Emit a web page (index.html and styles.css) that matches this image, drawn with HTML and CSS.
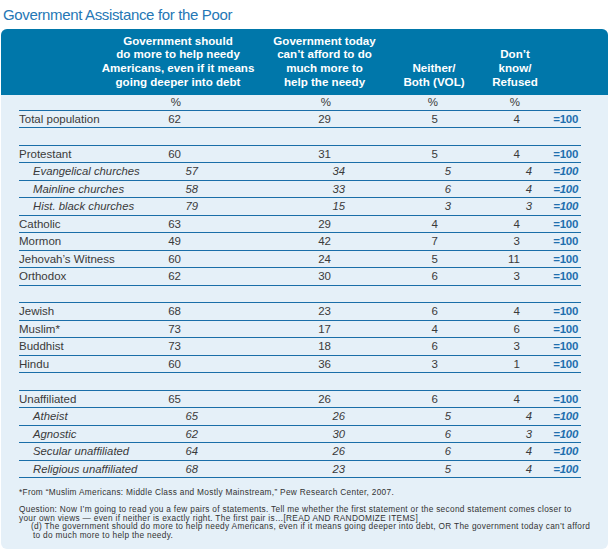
FILE: index.html
```html
<!DOCTYPE html>
<html>
<head>
<meta charset="utf-8">
<link rel="stylesheet" href="styles.css">
</head>
<body>
<div class="title">Government Assistance for the Poor</div>
<div class="panel">
  <div class="head">
    <div></div>
    <div class="h">Government should<br>do more to help needy<br>Americans, even if it means<br>going deeper into debt</div>
    <div class="h">Government today<br>can’t afford to do<br>much more to<br>help the needy</div>
    <div class="h">Neither/<br>Both (VOL)</div>
    <div class="h">Don’t<br>know/<br>Refused</div>
  </div>
  <div class="table">
    <div class="row pct"><div></div><div class="n1">%</div><div class="n2">%</div><div class="n3">%</div><div class="n4">%</div><div></div><div></div></div>
    <div class="row"><div class="lab">Total population</div><div class="n1">62</div><div class="n2">29</div><div class="n3">5</div><div class="n4">4</div><div class="eq">=100</div><div></div></div>
    <div class="row"></div>
    <div class="row"><div class="lab">Protestant</div><div class="n1">60</div><div class="n2">31</div><div class="n3">5</div><div class="n4">4</div><div class="eq">=100</div><div></div></div>
    <div class="row sub"><div class="lab">Evangelical churches</div><div class="n1">57</div><div class="n2">34</div><div class="n3">5</div><div class="n4">4</div><div class="eq">=100</div><div></div></div>
    <div class="row sub"><div class="lab">Mainline churches</div><div class="n1">58</div><div class="n2">33</div><div class="n3">6</div><div class="n4">4</div><div class="eq">=100</div><div></div></div>
    <div class="row sub"><div class="lab">Hist. black churches</div><div class="n1">79</div><div class="n2">15</div><div class="n3">3</div><div class="n4">3</div><div class="eq">=100</div><div></div></div>
    <div class="row"><div class="lab">Catholic</div><div class="n1">63</div><div class="n2">29</div><div class="n3">4</div><div class="n4">4</div><div class="eq">=100</div><div></div></div>
    <div class="row"><div class="lab">Mormon</div><div class="n1">49</div><div class="n2">42</div><div class="n3">7</div><div class="n4">3</div><div class="eq">=100</div><div></div></div>
    <div class="row"><div class="lab">Jehovah’s Witness</div><div class="n1">60</div><div class="n2">24</div><div class="n3">5</div><div class="n4">11</div><div class="eq">=100</div><div></div></div>
    <div class="row"><div class="lab">Orthodox</div><div class="n1">62</div><div class="n2">30</div><div class="n3">6</div><div class="n4">3</div><div class="eq">=100</div><div></div></div>
    <div class="row"></div>
    <div class="row"><div class="lab">Jewish</div><div class="n1">68</div><div class="n2">23</div><div class="n3">6</div><div class="n4">4</div><div class="eq">=100</div><div></div></div>
    <div class="row"><div class="lab">Muslim*</div><div class="n1">73</div><div class="n2">17</div><div class="n3">4</div><div class="n4">6</div><div class="eq">=100</div><div></div></div>
    <div class="row"><div class="lab">Buddhist</div><div class="n1">73</div><div class="n2">18</div><div class="n3">6</div><div class="n4">3</div><div class="eq">=100</div><div></div></div>
    <div class="row"><div class="lab">Hindu</div><div class="n1">60</div><div class="n2">36</div><div class="n3">3</div><div class="n4">1</div><div class="eq">=100</div><div></div></div>
    <div class="row"></div>
    <div class="row"><div class="lab">Unaffiliated</div><div class="n1">65</div><div class="n2">26</div><div class="n3">6</div><div class="n4">4</div><div class="eq">=100</div><div></div></div>
    <div class="row sub"><div class="lab">Atheist</div><div class="n1">65</div><div class="n2">26</div><div class="n3">5</div><div class="n4">4</div><div class="eq">=100</div><div></div></div>
    <div class="row sub"><div class="lab">Agnostic</div><div class="n1">62</div><div class="n2">30</div><div class="n3">6</div><div class="n4">3</div><div class="eq">=100</div><div></div></div>
    <div class="row sub"><div class="lab">Secular unaffiliated</div><div class="n1">64</div><div class="n2">26</div><div class="n3">6</div><div class="n4">4</div><div class="eq">=100</div><div></div></div>
    <div class="row sub"><div class="lab">Religious unaffiliated</div><div class="n1">68</div><div class="n2">23</div><div class="n3">5</div><div class="n4">4</div><div class="eq">=100</div><div></div></div>
  </div>
  <div class="notes">
    <p class="note">*From “Muslim Americans: Middle Class and Mostly Mainstream,” Pew Research Center, 2007.</p>
    <p class="note q">Question: Now I’m going to read you a few pairs of statements. Tell me whether the first statement or the second statement comes closer to<br>your own views — even if neither is exactly right. The first pair is…[READ AND RANDOMIZE ITEMS]</p>
    <p class="note item">(d) The government should do more to help needy Americans, even if it means going deeper into debt, OR The government today can’t afford<br>to do much more to help the needy.</p>
  </div>
</div>
</body>
</html>
```

FILE: styles.css
```css
html, body {
  margin: 0;
  padding: 0;
  background: #ffffff;
}
body {
  font-family: "Liberation Sans", Arial, sans-serif;
  color: #3a3a3a;
}
.title {
  box-sizing: border-box;
  height: 29px;
  padding: 5px 0 0 3px;
  font-size: 15px;
  line-height: 20px;
  color: #2577b5;
  letter-spacing: -0.35px;
}
.panel {
  margin-left: 1px;
  width: 607px;
  background: #e5f0f8;
  border-radius: 6px;
  overflow: hidden;
}
.head {
  background: #0077aa;
  color: #ffffff;
  display: grid;
  grid-template-columns: 81px 156px 137px 82px 80px;
  align-items: end;
  padding: 4.5px 0 7px 18px;
}
.h {
  text-align: center;
  font-weight: bold;
  font-size: 11.6px;
  line-height: 13.7px;
  white-space: nowrap;
}
.table {
  padding: 0 27px 0 18px;
}
.row {
  display: grid;
  grid-template-columns: 141px 38px 147px 106px 81px 46px 3px;
  height: 16.5px;
  line-height: 16.5px;
  border-bottom: 1px solid #1a6ea8;
  font-size: 11.5px;
  white-space: nowrap;
}
.row.pct {
  height: 14.5px;
  line-height: 15px;
}
.n1, .n2, .n3, .n4, .eq {
  text-align: right;
}
.n1 { padding-right: 17px; }
.n2 { padding-right: 14px; }
.n3 { padding-right: 13px; }
.n4 { padding-right: 12px; }
.eq {
  font-weight: bold;
  color: #1f6fae;
  letter-spacing: -0.3px;
}
.sub {
  font-style: italic;
  font-size: 11.3px;
}
.sub .lab {
  padding-left: 14px;
}
.sub .n1, .sub .n2, .sub .n3, .sub .n4 {
  padding-right: 0;
}
.sub .eq {
  font-size: 11.5px;
}
.notes {
  padding: 9.4px 0 9.6px 18px;
  font-size: 8.3px;
  line-height: 8.6px;
  letter-spacing: 0.3px;
  color: #333333;
}
.note {
  margin: 0 0 8.7px 0;
  white-space: nowrap;
}
.note.q {
  margin-bottom: 0;
}
.note.item {
  margin: 0;
  padding-left: 14px;
  text-indent: -2px;
}
```
